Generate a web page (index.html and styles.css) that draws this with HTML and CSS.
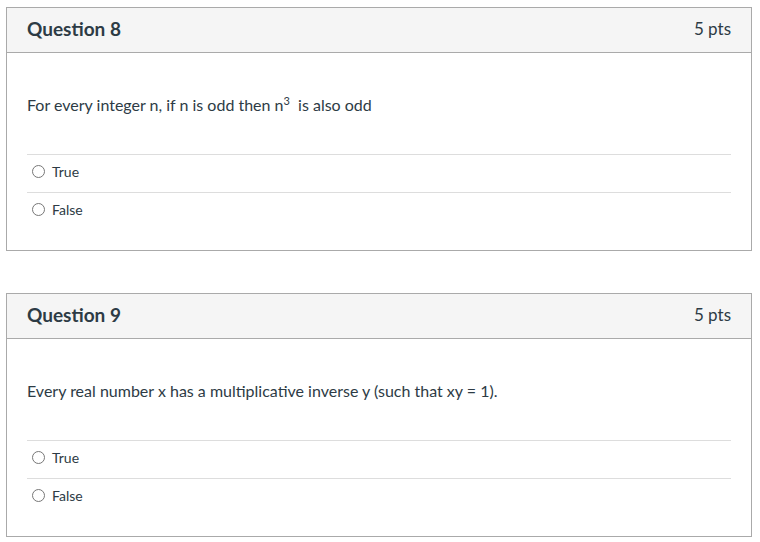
FILE: index.html
```html
<!DOCTYPE html>
<html>
<head>
<meta charset="utf-8">
<link rel="stylesheet" href="styles.css">
</head>
<body>
<div class="quiz">
  <section class="question">
    <header class="q-header">
      <h2 class="q-title">Question 8</h2>
      <span class="q-points">5 pts</span>
    </header>
    <div class="q-body">
      <p class="q-text">For every integer n, if n is odd then n<sup>3</sup>&nbsp; is also odd</p>
      <div class="answers">
        <label class="answer"><span class="radio"></span><span class="answer-label">True</span></label>
        <label class="answer"><span class="radio"></span><span class="answer-label">False</span></label>
      </div>
    </div>
  </section>
  <section class="question">
    <header class="q-header">
      <h2 class="q-title">Question 9</h2>
      <span class="q-points">5 pts</span>
    </header>
    <div class="q-body">
      <p class="q-text">Every real number x has a multiplicative inverse y (such that xy = 1).</p>
      <div class="answers">
        <label class="answer"><span class="radio"></span><span class="answer-label">True</span></label>
        <label class="answer"><span class="radio"></span><span class="answer-label">False</span></label>
      </div>
    </div>
  </section>
</div>
</body>
</html>
```
FILE: styles.css
```css
* { box-sizing: border-box; }
html, body { margin: 0; padding: 0; background: #fff; }
body {
  font-family: Lato, "Open Sans", sans-serif;
  color: #2d3b45;
}
.quiz {
  padding: 7px 8px 0 6px;
  display: flex;
  flex-direction: column;
  gap: 42px;
}
.question {
  border: 1px solid #aaaaaa;
  width: 746px;
}
.q-header {
  display: flex;
  justify-content: space-between;
  align-items: center;
  height: 45px;
  padding: 0 20px 4px;
  background: #f5f5f5;
  border-bottom: 1px solid #aaaaaa;
}
.q-title {
  margin: 0;
  font-size: 19px;
  font-weight: 700;
}
.q-points {
  font-size: 17px;
  font-weight: 400;
  color: #2d3b45;
}
.q-body {
  padding: 42px 20px 20px;
}
.q-text {
  margin: 0 0 39px;
  font-size: 16px;
  line-height: 20px;
  height: 20px;
}
.q-text sup {
  font-size: 11px;
  line-height: 0;
  vertical-align: 6px;
}
.answer {
  display: flex;
  align-items: center;
  height: 38px;
  border-top: 1px solid #dddddd;
  padding-left: 5px;
  padding-bottom: 5px;
}
.radio {
  width: 13px;
  height: 13px;
  border: 1px solid #777777;
  border-radius: 50%;
  margin-right: 7px;
  background: #fff;
}
.answer-label {
  font-size: 14px;
}
```
